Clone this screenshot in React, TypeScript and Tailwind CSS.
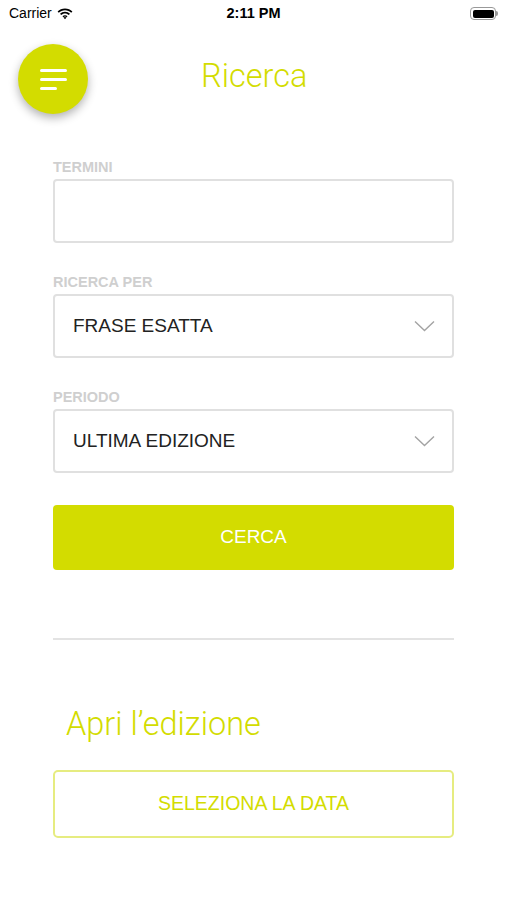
const lime = 'text-[#d3dc00]';

function StatusBar() {
    return (
        <div className="relative h-[27px] flex items-center justify-between px-[9px] text-black font-['Liberation_Sans',sans-serif]">
            <div className="flex items-center gap-[5px] text-[14px]">
                <span>Carrier</span>
                <svg width="16" height="12" viewBox="0 0 16 12">
                    <path d="M8 2.2c2.4 0 4.6.9 6.2 2.5l1.2-1.3C13.5 1.5 10.9.4 8 .4S2.5 1.5.6 3.4l1.2 1.3C3.4 3.1 5.6 2.2 8 2.2z" fill="#000" />
                    <path d="M8 5.6c1.5 0 2.8.6 3.8 1.5l1.2-1.3C11.7 4.6 9.9 3.8 8 3.8s-3.7.8-5 2l1.2 1.3c1-.9 2.3-1.5 3.8-1.5z" fill="#000" />
                    <path d="M8 8.9c.6 0 1.1.2 1.5.6L8 11.2 6.5 9.5c.4-.4.9-.6 1.5-.6z M8 7.2c1 0 1.9.4 2.5 1l-1 1.1C9 8.8 8.5 8.6 8 8.6s-1 .2-1.5.7l-1-1.1c.6-.6 1.5-1 2.5-1z" fill="#000" />
                </svg>
            </div>
            <span className="absolute left-1/2 -translate-x-1/2 text-[14.5px] font-bold">2:11 PM</span>
            <div className="flex items-center">
                <div className="w-[26px] h-[13px] rounded-[4px] border border-[#999] p-[1.5px]">
                    <div className="w-full h-full rounded-[2px] bg-black" />
                </div>
                <div className="w-[2px] h-[5px] rounded-r-sm bg-[#999]" />
            </div>
        </div>
    );
}

function Label({ children }: { children: string }) {
    return <p className="text-[14.5px] font-bold text-[#cfcfcf] mb-[3px] leading-[17px]">{children}</p>;
}

function Select({ value }: { value: string }) {
    return (
        <div className="h-[64px] border-2 border-[#e0e0e0] rounded-[4px] flex items-center justify-between pl-[18px] pr-[17px]">
            <span className="text-[19px] text-[#222]">{value}</span>
            <svg width="21" height="12" viewBox="0 0 21 12" fill="none">
                <path d="M1 1.5l9.5 9 9.5-9" stroke="#a3a3a3" strokeWidth="1.4" />
            </svg>
        </div>
    );
}

export default function App() {
    return (
        <main className="w-[507px] h-[900px] bg-white font-['Liberation_Sans',sans-serif] overflow-hidden">
            <StatusBar />

            <div className="relative h-[103px]">
                <button className="absolute left-[18px] top-[17px] w-[70px] h-[70px] rounded-full bg-[#d3dc00] shadow-[0_4px_10px_rgba(0,0,0,0.3)] flex flex-col items-start justify-center pl-[22px] gap-[6px]">
                    <span className="block w-[27px] h-[3px] bg-white rounded-full" />
                    <span className="block w-[27px] h-[3px] bg-white rounded-full" />
                    <span className="block w-[17px] h-[3px] bg-white rounded-full" />
                </button>
                <h1 className={`absolute left-[201px] top-[29px] text-[32.5px] font-light font-['Roboto',sans-serif] leading-[40px] ${lime}`}>Ricerca</h1>
            </div>

            <div className="px-[53px] pt-[29px]">
                <Label>TERMINI</Label>
                <div className="h-[64px] border-2 border-[#e0e0e0] rounded-[4px]" />

                <div className="mt-[31px]">
                    <Label>RICERCA PER</Label>
                    <Select value="FRASE ESATTA" />
                </div>

                <div className="mt-[31px]">
                    <Label>PERIODO</Label>
                    <Select value="ULTIMA EDIZIONE" />
                </div>

                <button className="mt-[32px] w-full h-[65px] bg-[#d3dc00] rounded-[4px] text-white text-[19px]">CERCA</button>

                <hr className="mt-[68px] border-t-2 border-[#e3e3e3]" />

                <h2 className={`mt-[64px] ml-[13px] text-[32.5px] font-light font-['Roboto',sans-serif] leading-[40px] ${lime}`}>Apri l’edizione</h2>

                <button className={`mt-[26px] w-full h-[68px] border-2 border-[#e6ec80] rounded-[5px] text-[19.5px] ${lime}`}>SELEZIONA LA DATA</button>
            </div>
        </main>
    );
}
